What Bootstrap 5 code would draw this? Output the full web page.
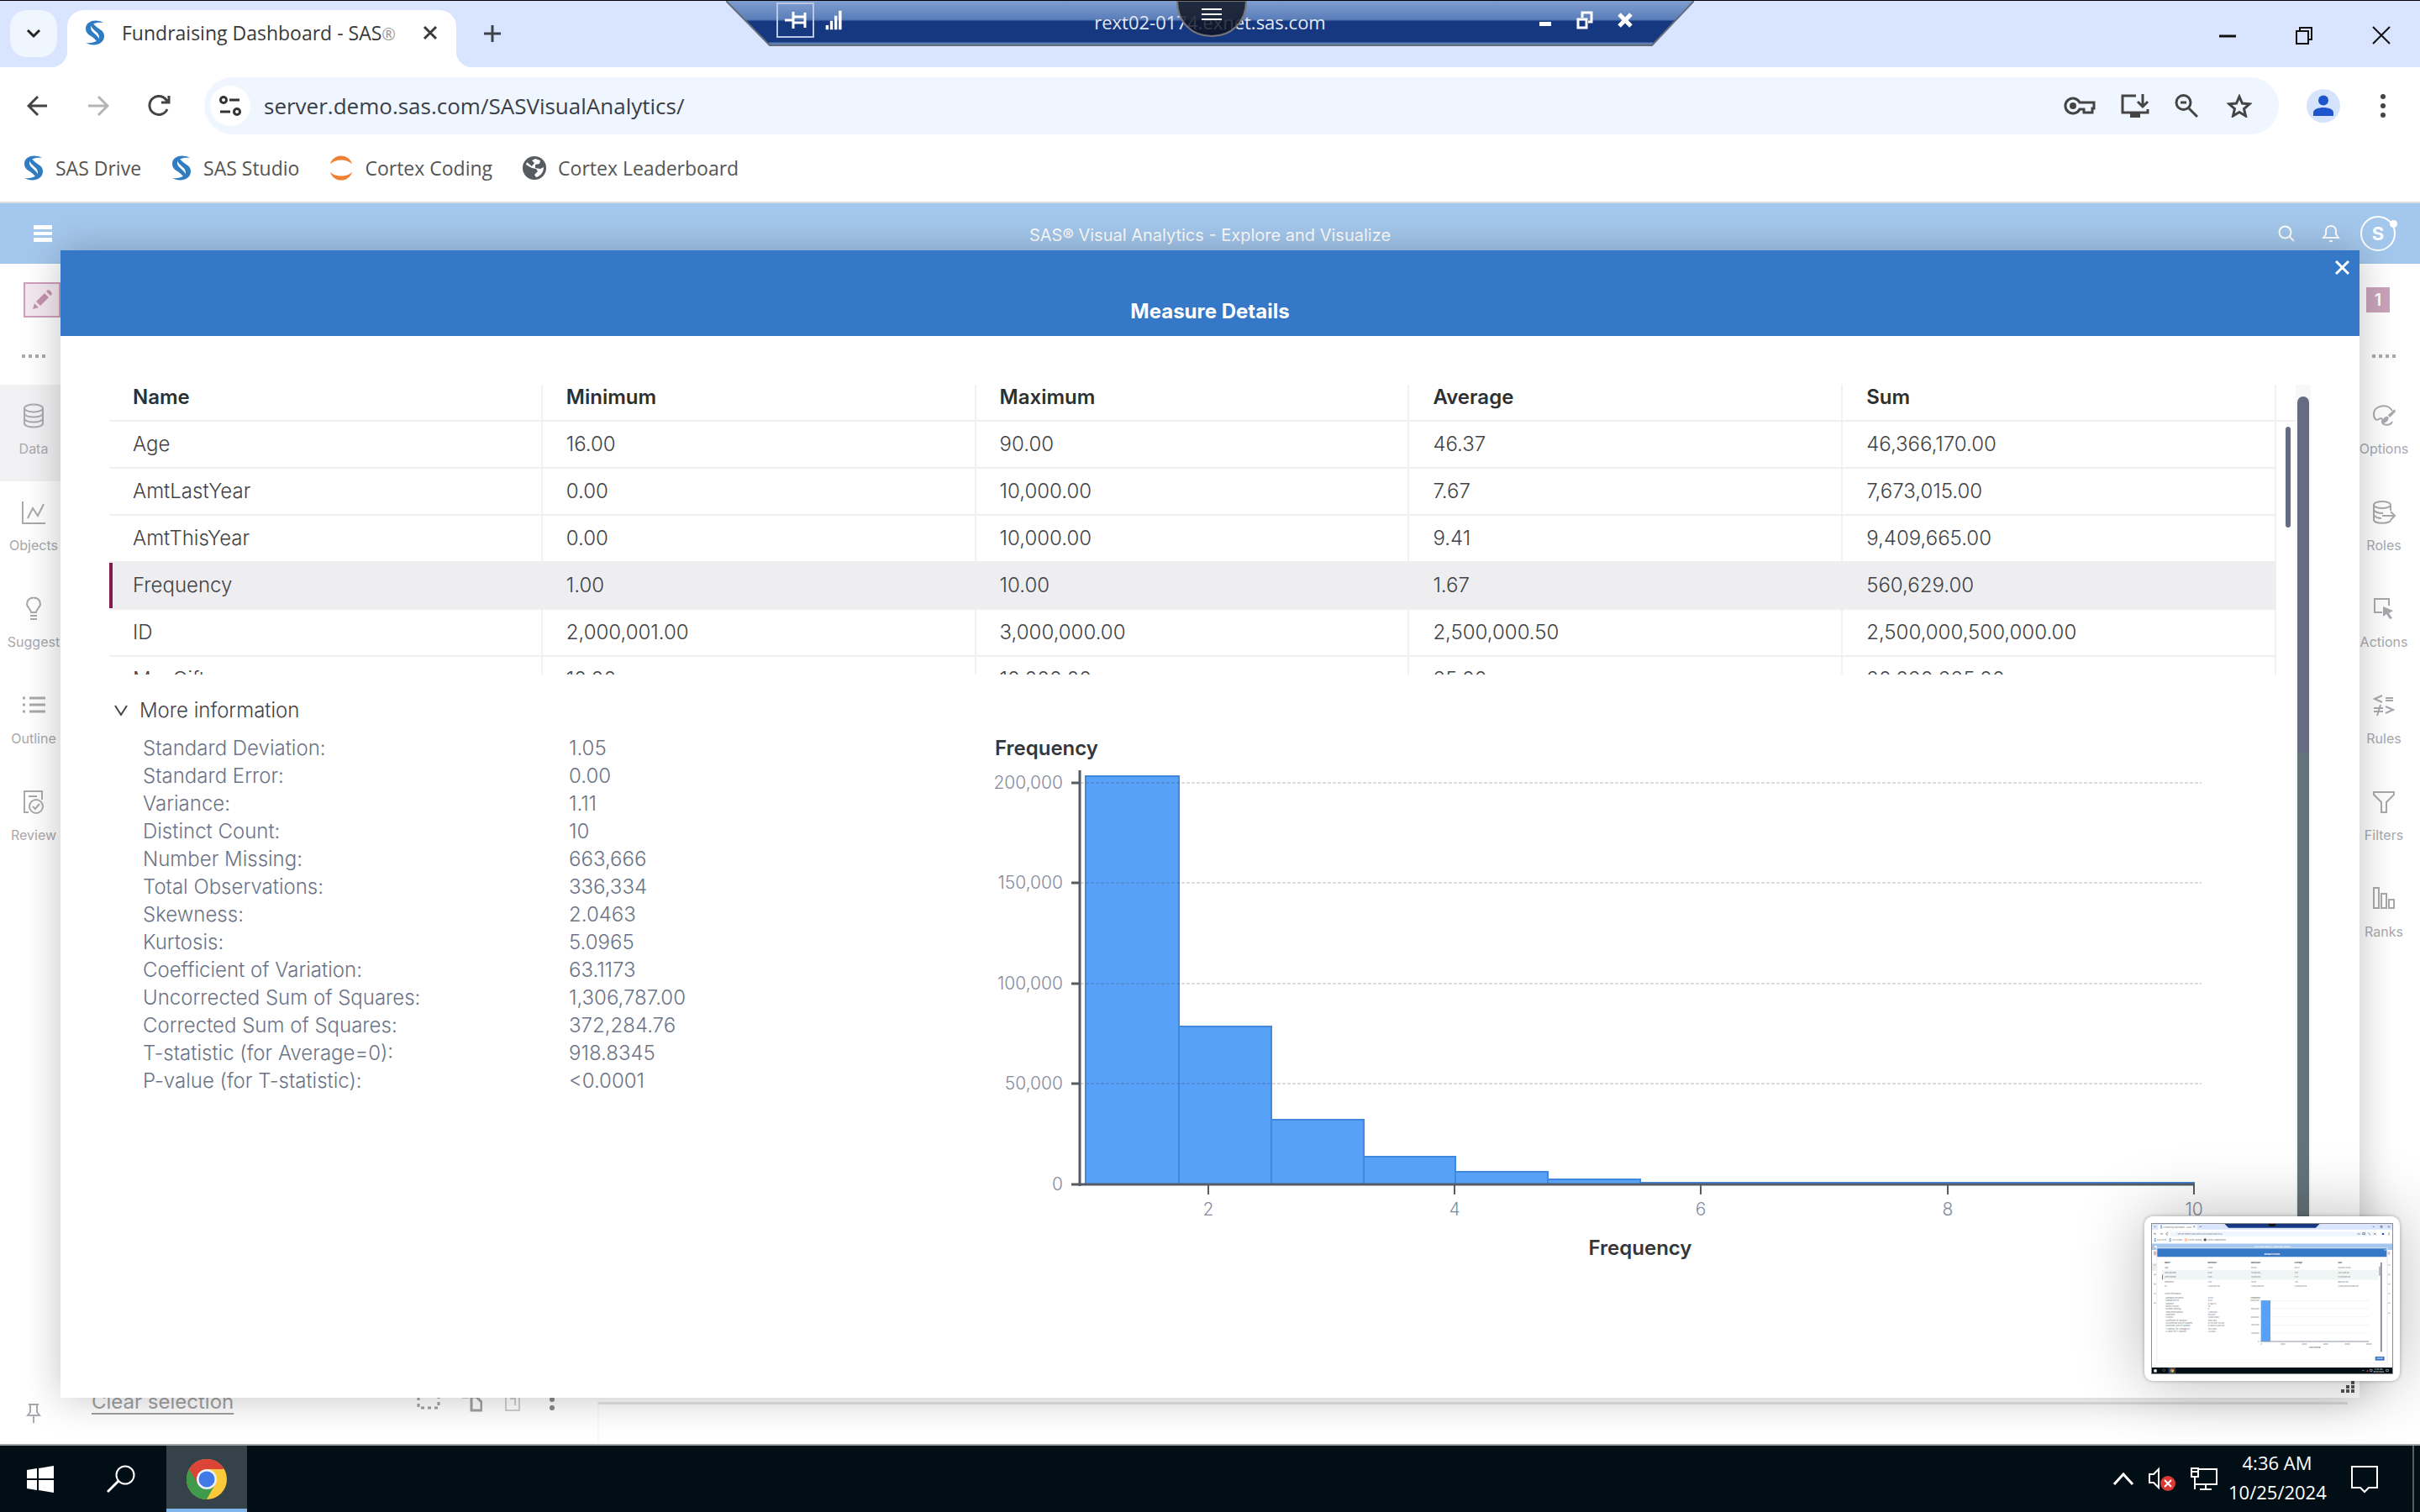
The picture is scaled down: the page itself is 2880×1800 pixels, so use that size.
<!DOCTYPE html>
<html lang="en">
<head>
<meta charset="utf-8">
<meta name="viewport" content="width=device-width, initial-scale=1">
<title>Fundraising Dashboard - SAS®</title>
<link href="https://cdn.jsdelivr.net/npm/bootstrap@5.3.0/dist/css/bootstrap.min.css" rel="stylesheet">
<style>
  :root { --ui: "Open Sans", "Noto Sans", sans-serif; --app: Inter, "Noto Sans", sans-serif; }
  body { font-family: var(--app); font-size: 24px; line-height: 32px; color: #3f4347; background: #fff; overflow: hidden; }
  button { background: none; border: 0; padding: 0; color: inherit; font: inherit; }
  svg { display: block; flex: none; }
  .ln { fill: none; stroke: currentColor; stroke-width: 3; }
  .thin { stroke-width: 2; }
  .thick { stroke-width: 5; }
  .faint { stroke: #b5b5b5; }

  /* browser chrome */
  .tabstrip { height: 80px; background: #d9e5ff; border-top: 1px solid #000; padding: 11px 34px 0 12px; font-family: var(--ui); }
  .tab-search { width: 56px; height: 56px; border-radius: 20px; background: #f0f6fe; color: #222; }
  .browser-tab { width: 463px; height: 68px; margin-left: 12px; padding: 0 22px 14px 21px; background: #fff; border-radius: 20px 20px 0 0; font-size: 23px; color: #3a3a3a; }
  .browser-tab::before, .browser-tab::after { content: ""; position: absolute; bottom: 0; width: 20px; height: 20px; }
  .browser-tab::before { left: -20px; background: radial-gradient(circle at 0 0, transparent 20px, #fff 21px); }
  .browser-tab::after { right: -20px; background: radial-gradient(circle at 100% 0, transparent 20px, #fff 21px); }
  .browser-tab sup { font-size: 20px; top: 0; color: #999; }
  .win-btns { gap: 69px; height: 60px; color: #111; }
  .toolbar-row { height: 80px; padding: 12px 40px 0 32px; background: #fff; color: #444; font-family: var(--ui); }
  .nav-btns { gap: 46px; width: 211px; }
  .omnibox { height: 68px; border-radius: 34px; background: #eff6ff; padding: 0 32px 0 7px; margin-right: 33px; }
  .omni-icons { gap: 26px; }
  .site-info { width: 48px; height: 48px; border-radius: 50%; background: #fff; color: #333; }
  .omnibox input { border: 0; background: none; margin-left: 14px; font-size: 26px; color: #3a3e48; outline: 0; }
  .avatar { width: 40px; height: 40px; border-radius: 50%; background: #d5e3fd; margin-right: 47px; }
  .bookmarks { height: 82px; padding: 0 28px 2px; gap: 36px; border-bottom: 2px solid #dcdcdc; font-family: var(--ui); font-size: 23px; }
  .bookmarks a { color: #555; text-decoration: none; gap: 14px; }

  /* remote session bar */
  .rdp-bar { position: absolute; top: 1px; left: 50%; width: 1152px; height: 54px; margin-left: -576px; padding: 2px 72px 10px 60px; color: #fff; font-family: var(--ui); font-size: 22px; }
  .rdp-shape { position: absolute; inset: 0; width: 100%; height: 100%; }
  .rdp-pin { width: 45px; height: 42px; border: 2px solid #b9c8e4; }
  .rdp-name { color: #e2e8f4; }
  .rdp-handle { position: absolute; top: 0; left: 50%; margin-left: -40px; }

  /* application */
  .app-area { flex: 1 1 auto; min-height: 0; overflow: hidden; }
  .app-header { height: 72px; background: #a4c8ed; color: #fff; padding: 0 29px 0 40px; }
  .app-header .app-name { font-size: 20px; padding-top: 4px; color: #fff; }
  .user-badge { width: 42px; height: 42px; border: 2px solid #fff; border-radius: 50%; font-size: 22px; font-weight: 700; }
  .user-badge::after { content: ""; position: absolute; top: 3px; right: -4px; width: 9px; height: 9px; border-radius: 50%; background: #fff; }
  .rail { color: #a9a9ae; font-size: 16px; line-height: 20px; padding-top: 22px; }
  .rail-left { width: 80px; padding-bottom: 25px; }
  .rail-right { width: 86px; }
  .edit-box { width: 44px; height: 42px; margin-left: 28px; border: 2px solid #cf9fbb; background: #f3e8ef; color: #c592ad; }
  .count-box { width: 28px; height: 30px; margin: 6px 0 6px 22px; background: #c9a3b9; color: #fff; font-weight: 600; font-size: 20px; }
  .grip { height: 80px; padding-top: 40px; }
  .rail-item { height: 115px; padding-top: 22px; gap: 14px; }
  .rail-item.current { background: #f2f2f4; }
  .work-foot { height: 66px; margin-left: 29px; font-size: 24px; color: #a0a0a0; }
  .work-foot a { color: #a0a0a0; width: 387px; text-underline-offset: 5px; }
  .work-foot .foot-icons { width: 215px; gap: 26px; }
  .canvas-edge { height: 48px; border-top: 3px solid #e6e6e6; border-left: 2px solid #f7f7f7; }

  /* dialog */
  .details-dialog { position: absolute; top: 56px; left: 72px; right: 72px; bottom: 55px; background: #fff; box-shadow: 0 0 44px rgba(0, 0, 0, .24); }
  .dialog-head { height: 102px; background: #3578c8; color: #fff; padding: 12px 12px 0; }
  .dialog-head h1 { font-size: 24px; line-height: 32px; font-weight: 700; margin: 28px 0 0; }
  .dialog-main { padding: 58px 58px 90px 58px; min-height: 0; }
  .outer-track { width: 18px; background: #f7f7f7; padding: 14px 2px 0; }
  .outer-thumb { border-radius: 7px; background: linear-gradient(#666b84 424px, #64737a 424px); }
  .measures-wrap { height: 345px; padding-right: 23px; overflow: hidden; }
  .measures-wrap::before { content: ""; position: absolute; right: 0; top: 42px; width: 24px; height: 2px; background: #f1f1f1; }
  .inner-thumb { position: absolute; right: 6px; top: 50px; width: 6px; height: 120px; border-radius: 3px; background: #666b84; }
  .measures { table-layout: fixed; margin: 0; width: 100%; border-collapse: separate; border-spacing: 0; }
  .measures th, .measures td { height: 56px; padding: 0 0 0 28px; vertical-align: middle; line-height: 30px; border-bottom: 2px solid #efefef; border-right: 2px solid #f2f2f2; }
  .measures thead th { height: 44px; padding-bottom: 12px; font-weight: 600; color: #2c3034; }
  .measures tbody th { font-weight: 300; }
  .measures td { font-weight: 300; }
  .measures .chosen > * { background: #eeeef1; border-right-color: #eeeef1; }
  .measures .chosen th { box-shadow: inset 4px 0 #821b52; }
  .more-btn { margin: 27px 0 12px 6px; gap: 14px; font-weight: 300; }
  .facts { grid-template-columns: 1054px 1fr; }
  .stat-list { line-height: 33px; color: #6b7387; margin-left: 40px; font-weight: 300; }
  .stat-list th { width: 507px; padding: 0; font-weight: 300; }
  .stat-list td { padding: 0; }
  .chart { width: 100%; height: auto; overflow: visible; }
  .chart text { font-family: var(--app); font-size: 21px; fill: #858b9c; font-weight: 300; }
  .chart .ttl { font-size: 24px; font-weight: 600; fill: #33373b; }
  .resize { position: absolute; right: 6px; bottom: 6px; }

  /* preview of the previous screen */
  .preview { position: absolute; right: 24px; bottom: 75px; width: 304px; padding: 8px; border-radius: 10px; background: #fff; box-shadow: 0 0 4px rgba(0,0,0,.3), 0 0 80px rgba(0, 0, 0, .28); }
  .preview svg { width: 100%; height: auto; border: 1px solid #8d8d8d; }
  .preview text { font-family: var(--app); font-size: 11px; fill: #777; }
  .preview .stats text, .preview .axis text { font-size: 10px; fill: #9a9fae; }

  /* taskbar */
  .taskbar { height: 81px; background: #020e15; border-top: 2px solid #9fa5a7; color: #fff; font-family: "Open Sans", sans-serif; }
  .task-btn { width: 96px; }
  .task-btn.running { background: #35424a; border-bottom: 4px solid #80b5ea; padding-top: 4px; margin-left: 6px; }
  .tray-icons { gap: 16px; }
  .clock { font-size: 22px; line-height: 35px; width: 116px; margin: 0 29px 0 12px; padding-bottom: 4px; }
  .show-desktop { border-left: 2px solid #565e62; width: 9px; margin-left: 40px; }
</style>
<script src="https://cdn.jsdelivr.net/npm/bootstrap@5.3.0/dist/js/bootstrap.bundle.min.js"></script>
</head>
<body class="vh-100 d-flex flex-column position-relative">
<svg width="0" height="0" class="position-absolute" aria-hidden="true">
  <symbol id="sas" viewBox="0 0 24 30"><path fill="#2f7cc3" d="M22 3C13-2 1 1 1 10c0 8 8 8 13 15 1.500 1.500 3.500.5 3-1.500C16 17 7 15 7 9c0-5 7-7 15-6z"/><path fill="#2f7cc3" d="M1 27c9 5 22 2 22-8 0-8-8-8-13-15C9 2.500 6.500 3.500 7 5.500 8 12 17 14 17 20c0 5-8 8-16 7z"/></symbol>
</svg>

<header>
  <div class="tabstrip d-flex align-items-start">
    <button class="tab-search d-flex align-items-center justify-content-center" aria-label="Search tabs"><svg width="20" height="14" viewBox="0 0 20 14"><path class="ln" d="M3 3l7 7 7-7"/></svg></button>
    <div class="browser-tab position-relative d-flex align-items-center">
      <svg width="24" height="30"><use href="#sas"/></svg>
      <span class="ms-3 ps-1 flex-grow-1 text-nowrap">Fundraising Dashboard - SAS<sup>®</sup></span>
      <button aria-label="Close tab"><svg width="18" height="18" viewBox="0 0 18 18"><path class="ln" d="M2 2l14 14M16 2L2 16"/></svg></button>
    </div>
    <button class="ms-4 ps-2 pt-3" aria-label="New tab"><svg width="22" height="24" viewBox="0 0 22 24"><path class="ln" d="M11 2v20M1 12h20"/></svg></button>
    <div class="win-btns d-flex align-items-center ms-auto">
      <button aria-label="Minimize"><svg width="22" height="20" viewBox="0 0 22 20"><path class="ln" d="M1 11h20"/></svg></button>
      <button aria-label="Restore"><svg width="22" height="22" viewBox="0 0 22 22"><path class="ln thin" d="M2 6h14v15H2zM6 5V2h14v14h-3"/></svg></button>
      <button aria-label="Close"><svg width="24" height="22" viewBox="0 0 24 22"><path class="ln thin" d="M2 1l20 20M22 1L2 21"/></svg></button>
    </div>
  </div>

  <div class="toolbar-row d-flex align-items-center">
    <div class="nav-btns d-flex align-items-center flex-shrink-0">
      <button aria-label="Back"><svg width="26" height="26" viewBox="0 0 26 26"><path class="ln" d="M24 13H3M13 2L2 13l11 11"/></svg></button>
      <button aria-label="Forward"><svg width="26" height="26" viewBox="0 0 26 26"><path class="ln faint" d="M1 13h21M13 2l11 11-11 11"/></svg></button>
      <button aria-label="Reload"><svg width="28" height="26" viewBox="0 0 28 26"><path class="ln" d="M23 17a11 11 0 1 1 0-9M25 1v8h-9"/></svg></button>
    </div>
    <div class="omnibox d-flex align-items-center flex-grow-1">
      <button class="site-info d-flex align-items-center justify-content-center" aria-label="Site information"><svg width="26" height="24" viewBox="0 0 26 24"><g class="ln"><circle cx="5" cy="5" r="3.500"/><path d="M12 5h12M1 19h12"/><circle cx="21" cy="19" r="3.500"/></g></svg></button>
      <input class="flex-grow-1" type="text" aria-label="Address" value="server.demo.sas.com/SASVisualAnalytics/">
      <div class="omni-icons d-flex align-items-center">
        <button class="me-1" aria-label="Passwords"><svg width="38" height="22" viewBox="0 0 38 22"><path class="ln" d="M19 7a9 9 0 1 0 0 8h5v4h10v-5h2V7z"/><circle cx="11" cy="11" r="4" fill="currentColor"/></svg></button>
        <button aria-label="Install"><svg width="34" height="30" viewBox="0 0 34 30"><path class="ln" d="M18 3H2v20h30v-4M26 1v13M20 10l6 6 6-6"/><path d="M11 23h12v6H11z" fill="currentColor"/></svg></button>
        <button class="ms-1" aria-label="Zoom"><svg width="28" height="28" viewBox="0 0 28 28"><path class="ln" d="M17 17l10 10M7 10h7"/><circle class="ln" cx="10.500" cy="10" r="8.500"/></svg></button>
        <button class="ms-2" aria-label="Bookmark"><svg width="30" height="28" viewBox="0 0 30 28"><path class="ln" d="M15 3l3.500 8 8.500.8-6.500 5.700 2 8.500-7.500-4.500L7.500 26l2-8.500L3 11.800l8.500-.8z"/></svg></button>
      </div>
    </div>
    <button class="avatar d-flex align-items-center justify-content-center" aria-label="Profile"><svg width="26" height="26" viewBox="0 0 26 26" fill="#1f55cc"><circle cx="13" cy="6.500" r="6"/><path d="M1 25v-4c0-4 6-6 12-6s12 2 12 6v4z"/></svg></button>
    <button aria-label="Menu"><svg width="8" height="28" viewBox="0 0 8 28" fill="#444"><circle cx="4" cy="3" r="3"/><circle cx="4" cy="14" r="3"/><circle cx="4" cy="25" r="3"/></svg></button>
  </div>

  <nav class="bookmarks d-flex align-items-start pt-4" aria-label="Bookmarks">
    <a href="#" class="d-flex align-items-center"><svg width="24" height="30"><use href="#sas"/></svg>SAS Drive</a>
    <a href="#" class="d-flex align-items-center"><svg width="24" height="30"><use href="#sas"/></svg>SAS Studio</a>
    <a href="#" class="d-flex align-items-center"><svg width="28" height="32" viewBox="0 0 30 32" fill="#ee8133"><path d="M1 11C5-3 25-3 29 11 22 4 8 4 1 11zM1 21c4 14 24 14 28 0-7 7-21 7-28 0z"/></svg>Cortex Coding</a>
    <a href="#" class="d-flex align-items-center"><svg width="28" height="28" viewBox="0 0 28 28"><circle cx="14" cy="14" r="14" fill="#555b60"/><path fill="#fff" d="M15 3l6 2-1 4-5 1v4l6 1 4-2c0 6-4 11-9 12l-2-3 4-4-2-3-5-1-7-4c0-1 1-2 1-3l6 5 3-4-3-3z"/></svg>Cortex Leaderboard</a>
  </nav>
</header>

<div class="rdp-bar d-flex align-items-center">
  <svg class="rdp-shape" viewBox="0 0 1152 54" preserveAspectRatio="none"><defs><linearGradient id="rg" x2="0" y2="1"><stop offset="0" stop-color="#7f9dd0"/><stop offset=".42" stop-color="#5a7eb9"/><stop offset=".46" stop-color="#163880"/><stop offset="1" stop-color="#163880"/></linearGradient></defs><path d="M0 0h1152l-50 53H52z" fill="url(#rg)"/><path d="M51 51h1052" stroke="#5f7fb4" stroke-width="3"/><path d="M0 0l52 53h1050l50-53" fill="none" stroke="#666d78" stroke-width="2"/></svg>
  <button class="rdp-pin d-flex align-items-center justify-content-center position-relative" aria-label="Pin"><svg width="26" height="20" viewBox="0 0 26 20"><path class="ln" d="M0 10h10M10 0v20M10 6h14M10 13h14M24 1v18"/></svg></button>
  <svg class="ms-2 ps-1 position-relative" width="28" height="26" viewBox="0 0 28 26" fill="#fff"><path d="M2 20h4v6H2zM8 14h4v12H8zM14 7h4v19h-4zM20 0h4v26h-4z"/></svg>
  <span class="rdp-name position-absolute start-50 translate-middle-x pt-1">rext02-0174.exnet.sas.com</span>
  <div class="d-flex ms-auto gap-4 position-relative align-items-center">
    <button class="me-1" aria-label="Minimize session"><svg width="16" height="20" viewBox="0 0 16 20"><path d="M0 12h14v5H0z" fill="#fff"/></svg></button>
    <button class="me-1" aria-label="Restore session"><svg width="20" height="22" viewBox="0 0 20 22"><path class="ln" d="M2 10h10v10H2zM7 8V2h11v11h-4"/></svg></button>
    <button aria-label="Close session"><svg width="20" height="18" viewBox="0 0 20 18"><path class="ln thick" d="M3 2l14 14M17 2L3 16"/></svg></button>
  </div>
  <svg class="rdp-handle" width="84" height="44" viewBox="0 0 84 44"><path d="M1 0h82c0 26-18 42-41 42S1 26 1 0z" fill="#0c1220" fill-opacity=".82" stroke="#777" stroke-width="2"/><path d="M30 10h24M30 16h24M30 22h24" stroke="#fff" stroke-width="2"/></svg>
</div>

<div class="app-area position-relative d-flex flex-column">
  <header class="app-header d-flex align-items-center position-relative">
    <button aria-label="Application menu"><svg width="22" height="20" viewBox="0 0 22 20" fill="#fff"><path d="M0 0h22v5H0zM0 8h22v4H0zM0 15h22v5H0z"/></svg></button>
    <span class="app-name position-absolute start-50 translate-middle-x">SAS® Visual Analytics - Explore and Visualize</span>
    <div class="d-flex align-items-center ms-auto">
      <button class="me-4 pe-2" aria-label="Search"><svg width="20" height="20" viewBox="0 0 20 20"><circle class="ln thin" cx="8.500" cy="8.500" r="7"/><path class="ln thin" d="M14 14l5 5"/></svg></button>
      <button class="me-4" aria-label="Notifications"><svg width="22" height="22" viewBox="0 0 22 22"><path class="ln thin" d="M2 16h18l-3-4V8c0-8-12-8-12 0v4zM9 20h4"/></svg></button>
      <button class="user-badge position-relative" aria-label="User">S</button>
    </div>
  </header>

  <div class="d-flex flex-grow-1" style="min-height:0">
    <nav class="rail rail-left d-flex flex-column" aria-label="Left pane">
      <button class="edit-box d-flex align-items-center justify-content-center" aria-label="Edit"><svg width="24" height="24" viewBox="0 0 24 24" fill="currentColor"><path d="M1 23l2-7 5 5zM5 14L15 4l5 5L10 19zM17 2l2-2c2 0 5 3 5 5l-2 2z"/></svg></button>
      <div class="grip"><svg class="mx-auto mt-1" width="28" height="4" viewBox="0 0 28 4" fill="currentColor"><path d="M0 0h4v4H0zM8 0h4v4H8zM16 0h4v4h-4zM24 0h4v4h-4z"/></svg></div>
      <button class="rail-item current d-flex flex-column align-items-center"><svg width="26" height="30" viewBox="0 0 26 30"><g class="ln thin"><ellipse cx="13" cy="6" rx="11" ry="4.500"/><path d="M2 6v18c0 6 22 6 22 0V6M2 12c0 6 22 6 22 0M2 18c0 6 22 6 22 0"/></g></svg>Data</button>
      <button class="rail-item d-flex flex-column align-items-center"><svg width="28" height="30" viewBox="0 0 28 30"><path class="ln thin" d="M1 2v26h27M7 22l6-12 6 9 7-14"/></svg>Objects</button>
      <button class="rail-item d-flex flex-column align-items-center"><svg width="20" height="30" viewBox="0 0 20 30"><path class="ln thin" d="M7 19C6 14 2 13 2 9c0-10 16-10 16 0 0 4-4 5-5 10zM6 23h8M6 27h8"/></svg>Suggest</button>
      <button class="rail-item d-flex flex-column align-items-center"><svg width="28" height="30" viewBox="0 0 28 30"><path class="ln" d="M9 6h19M9 14h19M9 22h19M1 6h3M1 14h3M1 22h3"/></svg>Outline</button>
      <button class="rail-item d-flex flex-column align-items-center"><svg width="26" height="30" viewBox="0 0 26 30"><g class="ln thin"><path d="M7 27H2V2h21v10M7 8h10"/><circle cx="16" cy="20" r="8"/><path d="M12 20l3 3 5-6"/></g></svg>Review</button>
      <button class="mt-auto mx-auto" aria-label="Pin pane"><svg width="18" height="24" viewBox="0 0 18 24"><path class="ln thin" d="M3 2h12M5 2v9l-3 4h14l-3-4V2M9 15v9"/></svg></button>
    </nav>

    <div class="flex-grow-1 d-flex align-items-end">
      <div class="work-foot d-flex align-items-start flex-grow-1">
        <a href="#" class="text-nowrap flex-shrink-0">Clear selection</a>
        <div class="foot-icons d-flex align-items-center pt-2 flex-shrink-0">
          <svg width="28" height="16" viewBox="0 0 28 16"><path class="ln" stroke-dasharray="4 4" d="M2 0v13h24V0"/></svg>
          <svg width="24" height="20" viewBox="0 0 24 20"><path class="ln" d="M0 2h8M11 0v18h12V8l-6-6h-6"/></svg>
          <svg width="20" height="20" viewBox="0 0 20 20" opacity=".5"><path class="ln thin" d="M2 0v18h16V0M7 4h6v8"/></svg>
          <svg class="ms-2" width="6" height="20" viewBox="0 0 6 20" fill="#888"><circle cx="3" cy="5" r="3"/><circle cx="3" cy="15" r="3"/></svg>
        </div>
        <div class="canvas-edge flex-grow-1 mt-3"></div>
      </div>
    </div>

    <nav class="rail rail-right d-flex flex-column" aria-label="Right pane">
      <div class="count-box d-flex align-items-center justify-content-center">1</div>
      <div class="grip"><svg class="mx-auto mt-1" width="28" height="4" viewBox="0 0 28 4" fill="currentColor"><path d="M0 0h4v4H0zM8 0h4v4H8zM16 0h4v4h-4zM24 0h4v4h-4z"/></svg></div>
      <button class="rail-item d-flex flex-column align-items-center"><svg width="28" height="30" viewBox="0 0 28 30"><path class="ln thin" d="M24 9C19 0 2 2 2 13c0 6 3 8 6 6s5-1 4 3c0 4 9 6 12 0"/><path d="M13 20c1-4 4-5 6-4 2 3-1 7-6 8-2-1-1-3 0-4zM19 14l8-7 1 3-7 7z" fill="currentColor"/></svg>Options</button>
      <button class="rail-item d-flex flex-column align-items-center"><svg width="28" height="30" viewBox="0 0 28 30"><g class="ln thin"><ellipse cx="12" cy="6" rx="10" ry="4"/><path d="M2 6v18c0 5 20 5 20 0M22 6v7M2 12c2 4 8 4 11 4M2 18c2 3 6 4 9 4M12 19h14M22 14l5 5-5 5"/></g></svg>Roles</button>
      <button class="rail-item d-flex flex-column align-items-center"><svg width="26" height="30" viewBox="0 0 26 30"><path class="ln thin" d="M11 19H2V3h17v8"/><path d="M12 12l12 5-5 3 4 6-3 1-4-6-4 3z" fill="currentColor"/></svg>Actions</button>
      <button class="rail-item d-flex flex-column align-items-center"><svg width="26" height="30" viewBox="0 0 26 30"><path class="ln thin" d="M11 3L2 7l9 4M15 6h9M15 9h9M1 18h11M1 22h11M9 14L5 27M15 16l9 4-9 4"/></svg>Rules</button>
      <button class="rail-item d-flex flex-column align-items-center"><svg width="28" height="30" viewBox="0 0 28 30"><path class="ln thin" d="M2 3h24v3l-9 9v12h-6V15L2 6z"/></svg>Filters</button>
      <button class="rail-item d-flex flex-column align-items-center"><svg width="28" height="30" viewBox="0 0 28 30"><path class="ln thin" d="M2 2h6v24H2zM11 9h6v17h-6zM20 16h6v10h-6z"/></svg>Ranks</button>
    </nav>
  </div>

  <section class="details-dialog d-flex flex-column" role="dialog" aria-labelledby="dlgTitle">
    <div class="dialog-head">
      <div class="d-flex justify-content-end"><button aria-label="Close dialog"><svg width="17" height="17" viewBox="0 0 17 17"><path class="ln" d="M1 1l15 15M16 1L1 16"/></svg></button></div>
      <h1 id="dlgTitle" class="text-center">Measure Details</h1>
    </div>
    <div class="dialog-main d-flex flex-grow-1">
      <div class="flex-grow-1">
        <div class="measures-wrap position-relative">
          <table class="measures">
            <thead><tr><th scope="col">Name</th><th scope="col">Minimum</th><th scope="col">Maximum</th><th scope="col">Average</th><th scope="col">Sum</th></tr></thead>
            <tbody>
              <tr><th scope="row">Age</th><td>16.00</td><td>90.00</td><td>46.37</td><td>46,366,170.00</td></tr>
              <tr><th scope="row">AmtLastYear</th><td>0.00</td><td>10,000.00</td><td>7.67</td><td>7,673,015.00</td></tr>
              <tr><th scope="row">AmtThisYear</th><td>0.00</td><td>10,000.00</td><td>9.41</td><td>9,409,665.00</td></tr>
              <tr class="chosen"><th scope="row">Frequency</th><td>1.00</td><td>10.00</td><td>1.67</td><td>560,629.00</td></tr>
              <tr><th scope="row">ID</th><td>2,000,001.00</td><td>3,000,000.00</td><td>2,500,000.50</td><td>2,500,000,500,000.00</td></tr>
              <tr><th scope="row">MaxGift</th><td>10.00</td><td>10,000.00</td><td>25.00</td><td>20,020,225.00</td></tr>
            </tbody>
          </table>
          <span class="inner-thumb"></span>
        </div>
        <button class="more-btn d-flex align-items-center" aria-expanded="true"><svg width="16" height="14" viewBox="0 0 16 14"><path class="ln thin" d="M1 1l7 11 7-11"/></svg>More information</button>
        <div class="facts d-grid">
          <div>
            <table class="stat-list">
              <tbody>
                <tr><th scope="row">Standard Deviation:</th><td>1.05</td></tr>
                <tr><th scope="row">Standard Error:</th><td>0.00</td></tr>
                <tr><th scope="row">Variance:</th><td>1.11</td></tr>
                <tr><th scope="row">Distinct Count:</th><td>10</td></tr>
                <tr><th scope="row">Number Missing:</th><td>663,666</td></tr>
                <tr><th scope="row">Total Observations:</th><td>336,334</td></tr>
                <tr><th scope="row">Skewness:</th><td>2.0463</td></tr>
                <tr><th scope="row">Kurtosis:</th><td>5.0965</td></tr>
                <tr><th scope="row">Coefficient of Variation:</th><td>63.1173</td></tr>
                <tr><th scope="row">Uncorrected Sum of Squares:</th><td>1,306,787.00</td></tr>
                <tr><th scope="row">Corrected Sum of Squares:</th><td>372,284.76</td></tr>
                <tr><th scope="row">T-statistic (for Average=0):</th><td>918.8345</td></tr>
                <tr><th scope="row">P-value (for T-statistic):</th><td>&lt;0.0001</td></tr>
              </tbody>
            </table>
          </div>
          <svg class="chart" viewBox="0 0 1548 640" role="img" aria-label="Histogram of Frequency">
            <text class="ttl" x="0" y="25">Frequency</text>
            <g fill="#57a2f8" stroke="#4087dd" stroke-width="2">
              <path d="M108 50h111v486H108zM219 348h110v188H219zM329 459h110v77H329zM439 503h109v33H439zM548 521h110v15H548zM658 530h110v6H658z"/>
              <path d="M768 534h660"/>
            </g>
            <path d="M102 58H1436M102 177H1436M102 297H1436M102 416H1436" stroke="#334" stroke-opacity=".17" stroke-width="2" stroke-dasharray="4 2"/>
            <g stroke="#555c66" stroke-width="3" fill="none"><path d="M101 43v495M91 58h10M91 177h10M91 297h10M91 416h10M91 536h1337"/><path stroke-width="2" d="M254 536v12M547 536v12M840 536v12M1134 536v12M1427 536v12"/></g>
            <g text-anchor="end"><text x="81" y="65">200,000</text><text x="81" y="184">150,000</text><text x="81" y="304">100,000</text><text x="81" y="423">50,000</text><text x="81" y="543">0</text></g>
            <g text-anchor="middle"><text x="254" y="573">2</text><text x="547" y="573">4</text><text x="840" y="573">6</text><text x="1134" y="573">8</text><text x="1427" y="573">10</text><text class="ttl" x="768" y="620">Frequency</text></g>
          </svg>
        </div>
      </div>
      <div class="outer-track d-flex flex-shrink-0"><span class="outer-thumb flex-grow-1"></span></div>
    </div>
    <svg class="resize" width="16" height="14" viewBox="0 0 16 14" fill="#555"><path d="M12 0h4v4h-4zM12 5h4v4h-4zM6 5h4v4H6zM12 10h4v4h-4zM6 10h4v4H6zM0 10h4v4H0z"/></svg>
  </section>

  <figure class="preview m-0">
    <svg viewBox="62 50 860 536" role="img" aria-label="Previous screen">
      <path d="M62 50h860v536H62z" fill="#fff"/><path d="M62 50h860v20H62z" fill="#d9e5ff"/><path d="M84 54h139v18H84z" fill="#fff"/>
      <path d="M322 50h340l-14 14H336z" fill="#163880"/><path d="M478 50h28c0 13-28 13-28 0z" fill="#111"/>
      <g fill="none" stroke="#2f7cc3" stroke-width="3"><path d="M98 56c-8 0-4 4-2 5s3 5-4 4M76 103c-8 0-4 4-2 5s3 5-4 4M130 103c-8 0-4 4-2 5s3 5-4 4"/></g>
      <path d="M134 77h716a9 9 0 0 1 0 17H134a9 9 0 0 1 0-17z" fill="#eff6ff"/>
      <g fill="none" stroke="#555" stroke-width="2"><path d="M77 86h-8l3-3M92 86h8l-3-3M120 83a4 4 0 1 0 0 5M70 58l3 3 3-3M210 57l6 6M216 57l-6 6M232 60h7M852 60h6M880 57h6v6h-6zM907 57l6 6M913 57l-6 6M797 86h10M816 82h8v6h-8zM836 82l8 8M856 82l8 8M864 82l-8 8M910 81v10"/><circle cx="184" cy="107" r="4" stroke="#ee8133"/></g>
      <circle cx="252" cy="107" r="5" fill="#555"/><circle cx="889" cy="86" r="4" fill="#1f55cc"/>
      <text x="102" y="64" style="font-size:7px">Fundraising Dashboard - SAS®</text><text x="154" y="90" style="font-size:8px">server.demo.sas.com/SASVisualAnalytics/</text>
      <g style="font-size:7px"><text x="80" y="110" style="font-size:7px">SAS Drive</text><text x="134" y="110" style="font-size:7px">SAS Studio</text><text x="192" y="110" style="font-size:7px">Cortex Coding</text><text x="260" y="110" style="font-size:7px">Cortex Leaderboard</text></g>
      <path d="M62 121h860v22H62z" fill="#a4c8ed"/><path d="M62 190h20v28H62z" fill="#eee"/><path d="M68 148h14v14H68zM904 150h10v10h-10z" fill="#d9b5c8"/>
      <g fill="#ccc"><path d="M68 194h9v5h-9zM68 229h9v5h-9zM68 263h9v5h-9zM68 297h9v5h-9zM68 331h9v5h-9zM906 194h9v5h-9zM906 229h9v5h-9zM906 263h9v5h-9zM906 297h9v5h-9zM906 331h9v5h-9zM906 367h9v5h-9z"/></g>
      <path d="M72 128h7v7h-7z" fill="#fff"/>
      <text x="492" y="135" text-anchor="middle" style="fill:#fff;font-size:6px">SAS® Visual Analytics - Explore and Visualize</text>
      <path d="M78 136h828v412H78z" fill="#ececec"/><path d="M81 138h821v408H81z" fill="#fff"/><path d="M81 138h821v30H81z" fill="#3578c8"/>
      <text x="492" y="162" text-anchor="middle" style="fill:#fff;font-weight:700;font-size:7px">Measure Details</text><path d="M894 141l5 5M899 141l-5 5" stroke="#fff" stroke-width="2"/>
      <path d="M98 215h774v35H98z" fill="#f0f6f6"/><path d="M98 232h3v17h-3z" fill="#a6587e"/>
      <g class="stats">
        <text x="107" y="192" style="fill:#444;font-weight:600;font-size:7px">Name</text><text x="262" y="192" style="fill:#444;font-weight:600;font-size:7px">Minimum</text><text x="417" y="192" style="fill:#444;font-weight:600;font-size:7px">Maximum</text><text x="572" y="192" style="fill:#444;font-weight:600;font-size:7px">Average</text><text x="727" y="192" style="fill:#444;font-weight:600;font-size:7px">Sum</text>
      </g>
      <g id="miniRows"></g>
      <g id="miniStats"></g>
      <text x="415" y="319" style="font-weight:600;font-size:7px">Frequency</text>
      <g id="miniAxis"></g>
      <path d="M452 325h386M452 354h386M452 383h386M452 412h386M452 441h386" stroke="#eee" stroke-width="2"/><path d="M452 324h34v147h-34z" fill="#57a2f8"/><path d="M450 471h388" stroke="#8a93a5" stroke-width="3"/>
      <text x="645" y="496" text-anchor="middle" style="font-weight:600;font-size:7px">AmtThisYear</text>
      <path d="M880 188h5v320h-5zM875 202h3v34h-3z" fill="#7c8294"/><path d="M861 525h33v14h-33z" fill="#3578c8"/><text x="877" y="535" text-anchor="middle" style="fill:#fff;font-size:8px">Close</text>
      <path d="M62 564h860v22H62z" fill="#020e15"/><path d="M69 571h10v10H69z" fill="#fff"/><circle cx="105" cy="574" r="4" fill="none" stroke="#ccc"/><path d="M121 564h26v22h-26z" fill="#35424a"/><circle cx="134" cy="575" r="7" fill="#e94335"/><path d="M134 575v7a7 7 0 0 0 6-10z" fill="#fbc116"/><path d="M134 575v7a7 7 0 0 1-6-10z" fill="#34a853"/><circle cx="134" cy="575" r="3" fill="#4285f4" stroke="#fff"/>
      <text x="873" y="573" text-anchor="middle" style="fill:#fff;font-size:7px">4:35 AM</text><text x="873" y="583" text-anchor="middle" style="fill:#fff;font-size:7px">10/25/2024</text><path d="M814 577l4-4 4 4M842 571h8v7h-8zM900 571h8v7h-8z" fill="none" stroke="#fff" stroke-width="1.500"/><circle cx="833" cy="577" r="3" fill="#e33"/>
    </svg>
  </figure>
</div>

<footer class="taskbar d-flex align-items-stretch">
  <button class="task-btn d-flex align-items-center justify-content-center" aria-label="Start"><svg width="32" height="32" viewBox="0 0 32 32" fill="#fff"><path d="M0 5l12-2v12H0zM14 3l18-3v15H14zM0 17h12v12L0 27zM14 17h18v15l-18-3z"/></svg></button>
  <button class="task-btn d-flex align-items-center justify-content-center" aria-label="Search"><svg width="34" height="34" viewBox="0 0 34 34"><circle class="ln thin" cx="22" cy="12" r="10.500"/><path class="ln" d="M14 19L1 32"/></svg></button>
  <button class="task-btn running d-flex align-items-center justify-content-center" aria-label="Chrome"><svg width="48" height="48" viewBox="0 0 48 48"><circle cx="24" cy="24" r="24" fill="#fbc939"/><path fill="#dc4437" d="M24 24L3.200 12A24 24 0 0 1 44.800 12H24z"/><path fill="#3f9b4b" d="M24 24L3.200 12A24 24 0 0 0 24 48l10-18z"/><path fill="#dc4437" d="M3.200 12L13.600 30 24 24V12z"/><circle cx="24" cy="24" r="12" fill="#eef2fa"/><circle cx="24" cy="24" r="9.500" fill="#4079e8"/></svg></button>
  <div class="d-flex align-items-center ms-auto">
    <div class="tray-icons d-flex align-items-center">
      <svg width="26" height="18" viewBox="0 0 26 18"><path class="ln" d="M2 15L13 3l11 12"/></svg>
      <svg width="34" height="30" viewBox="0 0 34 30"><path class="ln thin" d="M2 9h5l6-6v22l-6-6H2z"/><circle cx="24" cy="20" r="9" fill="#d93a35"/><path class="ln thin" d="M20 16l8 8M28 16l-8 8"/></svg>
      <svg width="34" height="28" viewBox="0 0 34 28"><path class="ln thin" d="M10 2h22v18H6M2 1h8v10H2zM2 5h8M6 11v15M19 20v6M12 26h14"/></svg>
    </div>
    <div class="clock text-center text-nowrap">4:36 AM<br>10/25/2024</div>
  </div>
  <button aria-label="Notification center"><svg width="34" height="34" viewBox="0 0 34 34"><path class="ln thin" d="M2 2h30v25H22l-5 5-5-5H2z"/></svg></button>
  <span class="show-desktop"></span>
</footer>

<script>
  // Fill the small preview with its table, statistics and axis labels
  function put(id, x, y, value, size, anchor) {
    const t = document.createElementNS("http://www.w3.org/2000/svg", "text");
    t.setAttribute("x", x);
    t.setAttribute("y", y);
    if (anchor) t.setAttribute("text-anchor", anchor);
    t.style.fontSize = size + "px";
    t.textContent = value;
    document.getElementById(id).appendChild(t);
  }
  const cols = [107, 262, 417, 572, 727];
  [["Age", "16.00", "90.00", "46.37", "46,366,170.00"],
   ["AmtLastYear", "0.00", "10,000.00", "7.67", "7,673,015.00"],
   ["AmtThisYear", "0.00", "10,000.00", "9.41", "9,409,665.00"],
   ["Frequency", "1.00", "10.00", "1.67", "560,629.00"],
   ["ID", "2,000,001.00", "3,000,000.00", "2,500,000.50", "2,500,000,500,000.00"]
  ].forEach((row, r) => row.forEach((v, c) => put("miniRows", cols[c], 209 + r * 17, v, 7)));
  put("miniStats", 109, 304, "More information", 7);
  [["Standard Deviation:", "90.92"], ["Standard Error:", "0.09"], ["Variance:", "8,266.53"],
   ["Distinct Count:", "49"], ["Number Missing:", "0"], ["Total Observations:", "1,000,000"],
   ["Skewness:", "50.6297"], ["Kurtosis:", "4,008.9080"], ["Coefficient of Variation:", "966.2160"],
   ["Uncorrected Sum of Squares:", "8,354,967,425.00"], ["Corrected Sum of Squares:", "8,266,525,629.00"],
   ["T-statistic (for Average=0):", "103.4965"], ["P-value (for T-statistic):", "<0.0001"]
  ].forEach((row, r) => row.forEach((v, c) => put("miniStats", [111, 263][c], 318 + r * 10, v, 7)));
  ["1,000,000", "800,000", "600,000", "400,000", "200,000", "0"].forEach((v, i) => put("miniAxis", 445, 328 + i * 29, v, 7, "end"));
  ["0", "2000", "4000", "6000", "8000", "10000"].forEach((v, i) => put("miniAxis", 453 + i * 77, 483, v, 7, "middle"));
</script>
</body>
</html>
